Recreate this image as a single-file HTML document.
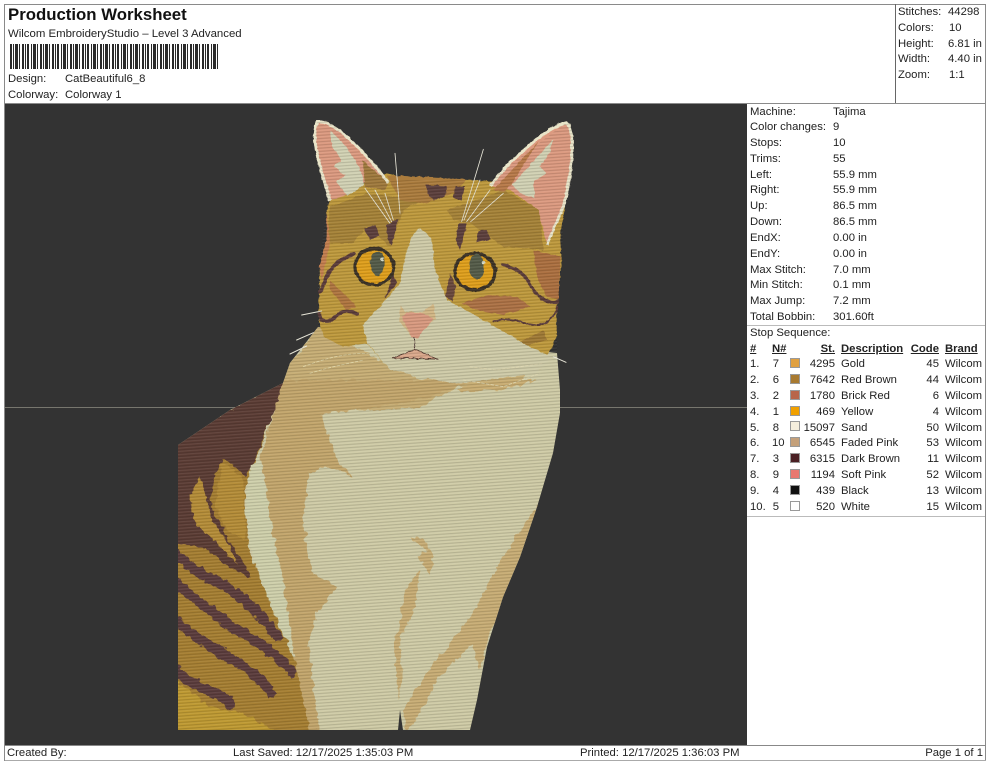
<!DOCTYPE html>
<html><head><meta charset="utf-8"><style>
html,body{margin:0;padding:0;background:#fff}
#p{position:relative;width:990px;height:762px;overflow:hidden;background:#fff;font-family:"Liberation Sans",sans-serif;font-size:11.3px;color:#222}
#p div{position:absolute;white-space:nowrap;line-height:16px;height:16px}
#p div.b{background:#8a8a8a;height:auto}
#p div.s{height:10px;width:10px;box-sizing:border-box;border:1px solid #999}
.r{text-align:right}
.u{font-weight:bold;text-decoration:underline}
</style></head><body><div id="p">
<div class="b" style="left:5px;top:4px;width:981px;height:1px"></div>
<div class="b" style="left:4px;top:4px;width:1px;height:757px"></div>
<div class="b" style="left:985px;top:4px;width:1px;height:757px"></div>
<div class="b" style="left:895px;top:4px;width:1px;height:100px;background:#666"></div>
<div class="b" style="left:5px;top:103px;width:981px;height:1px"></div>
<div class="b" style="left:5px;top:760px;width:981px;height:1px;background:#aaa"></div>
<div class="b" style="left:5px;top:745px;width:981px;height:1px;background:#888"></div>
<div class="b" style="left:747px;top:325px;width:238px;height:1px;background:#bbb"></div>
<div class="b" style="left:747px;top:516px;width:238px;height:1px;background:#bbb"></div>

<div style="left:8px;top:7px;font-size:16.8px;font-weight:bold;color:#111">Production Worksheet</div>
<div style="left:8px;top:26px;font-size:11.4px">Wilcom EmbroideryStudio – Level 3 Advanced</div>
<svg style="position:absolute;left:10px;top:44px" width="210" height="25"><line x1="0" y1="12.5" x2="209" y2="12.5" stroke="#2a2a2a" stroke-width="25" stroke-dasharray="2 1 1 1 3 1 1 2 2 1 1 1 2 2 1 1 3 1 1 2"/></svg>
<div style="left:8px;top:71px">Design:</div><div style="left:65px;top:71px">CatBeautiful6_8</div>
<div style="left:8px;top:87px">Colorway:</div><div style="left:65px;top:87px">Colorway 1</div>

<div style="left:898px;top:4px">Stitches:</div><div style="left:948px;top:4px">44298</div>
<div style="left:898px;top:20px">Colors:</div><div style="left:949px;top:20px">10</div>
<div style="left:898px;top:36px">Height:</div><div style="left:948px;top:36px">6.81 in</div>
<div style="left:898px;top:51px">Width:</div><div style="left:948px;top:51px">4.40 in</div>
<div style="left:898px;top:67px">Zoom:</div><div style="left:949px;top:67px">1:1</div>

<svg style="position:absolute;left:0;top:0" width="990" height="762" viewBox="0 0 990 762">
<defs>
<pattern id="t" width="6" height="3.2" patternUnits="userSpaceOnUse" patternTransform="rotate(-4)"><rect width="6" height="1.1" fill="#000" opacity=".13"/><rect y="1.6" width="6" height=".7" fill="#fff" opacity=".08"/></pattern>
<clipPath id="all"><path d="M178,445 L230,410 L283,383 L290,363 L318,327 L318,277 L327,203 L315,137 L317,120 L329,120 L387,180 L467,180 L490,180 L567,122 L573,133 L573,177 L563,220 L562,257 L557,323 L557,353 L560,390 L560,413 L553,453 L537,507 L520,557 L503,597 L487,647 L477,700 L470,730 L403,730 L400,710 L398,730 L178,730Z"/></clipPath>
<clipPath id="bd"><path d="M178,445 L230,410 L283,383 L290,363 L318,327 L557,353 L560,390 L560,413 L553,453 L537,507 L520,557 L503,597 L487,647 L477,700 L470,730 L403,730 L400,710 L398,730 L178,730Z"/></clipPath>
<filter id="rough" filterUnits="userSpaceOnUse" x="150" y="320" width="440" height="430"><feTurbulence type="fractalNoise" baseFrequency=".16" numOctaves="2" seed="4"/><feDisplacementMap in="SourceGraphic" scale="7" xChannelSelector="R" yChannelSelector="G"/></filter>
<filter id="soft" filterUnits="userSpaceOnUse" x="280" y="110" width="310" height="300"><feTurbulence type="fractalNoise" baseFrequency=".2" numOctaves="2" seed="9"/><feDisplacementMap in="SourceGraphic" scale="3" xChannelSelector="R" yChannelSelector="G"/></filter>
</defs>
<rect x="5" y="104" width="742" height="641" fill="#333333"/>
<rect x="5" y="407" width="742" height="1" fill="#77766e"/>
<!-- body -->
<g clip-path="url(#bd)">
<rect x="170" y="320" width="400" height="420" fill="#cfcba6"/>
<g filter="url(#rough)">
<path d="M285,370 L318,327 L420,380 L540,345 L520,385 L457,387 L420,408 L320,412 L283,400 Z" fill="#c7ae74"/>
<g transform="translate(170,380) scale(.33333)">
<path d="M0,190 L180,90 L350,0 L300,120 L260,240 L225,320 L225,420 L240,520 L280,620 L340,760 L400,900 L440,1060 L0,1060Z" fill="#a67f32"/>
<path d="M0,890 L120,980 L220,1000 L330,1060 L0,1060Z" fill="#bf9a30"/>
<path d="M0,190 L180,90 L350,0 L300,120 L258,235 L225,290 L190,255 L160,240 L135,290 L120,370 L170,470 L245,590 L170,560 L100,500 L0,490Z" fill="#5c3c36"/>
<path d="M90,290 L60,350 L70,420 L130,480 L200,550 L170,480 L120,410 L105,340Z" fill="#b58d38"/>
<path d="M160,245 L220,300 L225,480 L170,450 L135,370 L150,280Z" fill="#b58d38"/>
<g fill="none" stroke="#5c3e3c" stroke-linecap="butt" stroke-linejoin="round">
<path d="M0,510 C60,560 100,590 150,610 C210,640 280,710 330,780" stroke-width="30"/>
<path d="M0,590 C60,650 110,680 170,730 C240,770 320,820 375,885" stroke-width="30"/>
<path d="M0,700 C60,770 120,790 170,830 C230,860 280,900 310,950" stroke-width="30"/>
<path d="M0,860 C60,910 110,930 145,945 C165,950 180,965 185,985" stroke-width="30"/>
</g>
<path d="M240,260 L225,400 L240,500 L280,620 L340,760 L370,830 L340,600 L310,470 L290,330 L270,240Z" fill="#cfd0ab"/>
<path d="M340,0 L272,230 L290,330 L310,470 L340,600 L370,820 L420,1060 L450,1060 L415,800 L440,700 L500,620 L430,580 L410,500 L400,400 L420,280 L460,260 L550,290 L500,240 L450,100 L600,85 L780,50 L860,20 L920,0 Z" fill="#c3a66c"/>
<path d="M860,35 L1000,30 L1100,0 L1000,0 L880,20Z" fill="#c9ad72"/>
<path d="M1105,370 C1050,450 960,590 920,680 C870,760 780,850 700,990 L710,1060 L750,1000 L800,900 L905,790 L930,870 L960,760 L1010,650 L1080,520 Z" fill="#c8ad74"/>
<path d="M750,570 L700,640 L688,750 L672,770 L685,960 L695,900 L690,770 L730,700 Z" fill="#c8ad74"/>
<path d="M722,475 L755,470 L790,525 L780,582 L745,530 L770,510Z" fill="#c8ad74"/>
</g>
</g>
</g>
<g filter="url(#soft)">
<g transform="translate(290,110) scale(.33333)">
<!-- head -->
<path d="M120,270 L110,300 L115,380 L90,470 L85,620 L100,680 L160,710 L230,700 L300,780 L500,820 L750,780 L800,680 L800,600 L815,450 L810,380 L825,290 L780,200 L600,215 L530,208 L350,203 L290,190Z" fill="#bf9a3c"/>
<!-- dark bands -->
<path d="M120,290 L230,250 L400,270 L340,300 L300,410 L230,350 L190,400 L110,400Z" fill="#a68338"/>
<path d="M290,195 L530,208 L490,250 L400,280 L330,270Z" fill="#ab7c3c"/>
<path d="M470,300 L560,270 L640,240 L750,300 L760,420 L640,410 L540,340 L490,330Z" fill="#a68338"/>
<path d="M110,300 L120,400 L95,510 L88,470 L110,380Z" fill="#c47f50"/>
<path d="M730,420 L812,440 L805,570 L770,560 L740,500Z" fill="#ac7040"/>
<path d="M515,580 L590,555 L680,560 L720,590 L640,615 L560,600Z" fill="#ad7244"/>
<path d="M120,510 L200,590 L170,600 L120,540Z" fill="#b0763f"/>
<path d="M680,700 L760,660 L770,690 L700,710Z" fill="#a07a34"/>
<!-- muzzle -->
<path d="M392,355 L425,385 L435,480 L470,570 L600,640 L700,700 L785,740 L740,790 L500,822 L300,780 L232,700 L218,645 L260,600 L330,520 L345,440 L370,370Z" fill="#cfcba8"/>
<!-- ears -->
<path d="M120,272 C90,170 60,80 82,36 C130,28 220,120 295,218 L230,215 L170,255Z" fill="#dc9a80"/>
<path d="M120,62 C170,105 215,165 222,225 L170,258 L140,215 L165,195 L130,170 L155,150 L125,110Z" fill="#d2d2b4"/>
<path d="M218,150 L295,218 L285,240 L225,230Z" fill="#a07a3c"/>
<path d="M120,272 C90,170 60,80 82,36 C130,28 220,120 295,218" fill="none" stroke="#e9e5c9" stroke-width="9"/>
<path d="M600,228 C660,150 770,50 830,38 C855,60 850,180 820,290 L770,405 L745,300 L660,240Z" fill="#dc9a80"/>
<path d="M665,225 L790,88 L780,125 L750,170 L770,190 L730,215 L735,265 L690,250Z" fill="#d2d2b4"/>
<path d="M610,240 L745,95 L665,222 L640,245Z" fill="#b87a48"/>
<path d="M600,228 C660,150 770,50 830,38 C855,60 850,180 820,290 L770,405" fill="none" stroke="#e9e5c9" stroke-width="9"/>
<!-- eye lines -->
<g fill="none" stroke="#5b3d3a" stroke-linecap="round" stroke-linejoin="round">
<path d="M92,545 C110,490 130,455 190,432" stroke-width="12"/>
<path d="M88,612 C90,640 125,640 145,612 C165,598 185,608 200,610" stroke-width="11"/>
<path d="M640,465 C695,480 705,495 730,540 C750,570 780,580 802,575" stroke-width="10"/>
<path d="M612,635 C660,618 700,640 730,645 C770,648 795,620 802,590" stroke-width="6"/>
</g>
<path d="M310,490 L320,520 L285,565 L295,535Z" fill="#5b3d3a"/>
<path d="M480,490 L497,530 L490,575 L465,560Z" fill="#6b4a3c"/>
<!-- forehead marks -->
<g fill="#5d3f3d">
<path d="M408,225 L470,228 L465,262 L430,270 L410,250Z"/>
<path d="M495,230 L525,228 L515,272 L490,262Z"/>
<path d="M290,345 L325,325 L305,410 L292,385Z"/>
<path d="M222,355 L258,345 L268,378 L240,390Z"/>
<path d="M505,340 L530,340 L510,420 L497,390Z"/>
<path d="M565,362 L590,360 L602,388 L560,398Z"/>
</g>
<!-- eyes -->
<ellipse cx="253" cy="470" rx="63" ry="60" fill="#3a3026"/>
<ellipse cx="253" cy="470" rx="52" ry="50" fill="#e0a01c"/>
<ellipse cx="262" cy="460" rx="22" ry="36" fill="#555b4a"/>
<circle cx="275" cy="448" r="5" fill="#d8dcc8"/>
<ellipse cx="555" cy="485" rx="66" ry="60" fill="#3a3026"/>
<ellipse cx="555" cy="485" rx="55" ry="50" fill="#e0a01c"/>
<ellipse cx="560" cy="470" rx="22" ry="38" fill="#555b4a"/>
<circle cx="580" cy="458" r="5" fill="#d8dcc8"/>
<!-- nose -->
<path d="M332,585 L345,605 L395,608 L430,582 L438,625 L400,660 L385,682 L365,682 L328,632Z" fill="#d3b886"/>
<path d="M335,622 L350,608 L400,610 L432,628 L405,655 L385,682 L365,682Z" fill="#d99a80"/>
<path d="M373,680 L375,716" stroke="#4a3030" stroke-width="3" fill="none"/>
<path d="M305,745 L375,718 L445,748 C400,745 350,745 305,745Z" fill="#dba98c" stroke="#553a30" stroke-width="2.5"/>
</g>
</g>
<g transform="translate(290,110) scale(.33333)">
<!-- whiskers -->
<g stroke="#e8e6d8" fill="none" stroke-linecap="round">
<path d="M315,130 L330,310 M225,235 L300,340 M255,240 L305,335 M285,250 L310,330" stroke-width="2.5"/>
<path d="M580,118 L515,335 M570,210 L522,330 M600,240 L530,335 M640,250 L542,335" stroke-width="2.5"/>
<path d="M35,615 L95,603 M20,690 L70,668 M0,732 L50,708 M790,740 L828,757" stroke-width="3"/>
<path d="M40,770 C120,740 170,730 235,730 M60,790 C120,770 180,760 220,750" stroke="#e0d6a8" stroke-width="2.5" stroke-dasharray="8 6"/>
<path d="M540,770 L620,780 L760,760 M520,810 L640,830 L750,790" stroke="#dfd7b0" stroke-width="2.5" stroke-dasharray="8 6"/>
</g>
</g>
<!-- thread texture -->
<rect x="178" y="120" width="400" height="610" fill="url(#t)" clip-path="url(#all)"/>
</svg>

<div style="left:750px;top:104px">Machine:</div><div style="left:833px;top:104px">Tajima</div>
<div style="left:750px;top:119px">Color changes:</div><div style="left:833px;top:119px">9</div>
<div style="left:750px;top:135px">Stops:</div><div style="left:833px;top:135px">10</div>
<div style="left:750px;top:151px">Trims:</div><div style="left:833px;top:151px">55</div>
<div style="left:750px;top:167px">Left:</div><div style="left:833px;top:167px">55.9 mm</div>
<div style="left:750px;top:182px">Right:</div><div style="left:833px;top:182px">55.9 mm</div>
<div style="left:750px;top:198px">Up:</div><div style="left:833px;top:198px">86.5 mm</div>
<div style="left:750px;top:214px">Down:</div><div style="left:833px;top:214px">86.5 mm</div>
<div style="left:750px;top:230px">EndX:</div><div style="left:833px;top:230px">0.00 in</div>
<div style="left:750px;top:246px">EndY:</div><div style="left:833px;top:246px">0.00 in</div>
<div style="left:750px;top:262px">Max Stitch:</div><div style="left:833px;top:262px">7.0 mm</div>
<div style="left:750px;top:277px">Min Stitch:</div><div style="left:833px;top:277px">0.1 mm</div>
<div style="left:750px;top:293px">Max Jump:</div><div style="left:833px;top:293px">7.2 mm</div>
<div style="left:750px;top:309px">Total Bobbin:</div><div style="left:833px;top:309px">301.60ft</div>
<div style="left:750px;top:325px">Stop Sequence:</div>

<div class="u" style="left:750px;top:341px">#</div>
<div class="u" style="left:772px;top:341px">N#</div>
<div class="u r" style="left:795px;width:40px;top:341px">St.</div>
<div class="u" style="left:841px;top:341px">Description</div>
<div class="u r" style="left:899px;width:40px;top:341px">Code</div>
<div class="u" style="left:945px;top:341px">Brand</div>

<div style="left:750px;top:356px">1.</div><div class="r" style="left:765px;width:14px;top:356px">7</div><div class="s" style="left:790px;top:358px;background:#e0a040"></div><div class="r" style="left:795px;width:40px;top:356px">4295</div><div style="left:841px;top:356px">Gold</div><div class="r" style="left:899px;width:40px;top:356px">45</div><div style="left:945px;top:356px">Wilcom</div>
<div style="left:750px;top:372px">2.</div><div class="r" style="left:765px;width:14px;top:372px">6</div><div class="s" style="left:790px;top:374px;background:#a87a30"></div><div class="r" style="left:795px;width:40px;top:372px">7642</div><div style="left:841px;top:372px">Red Brown</div><div class="r" style="left:899px;width:40px;top:372px">44</div><div style="left:945px;top:372px">Wilcom</div>
<div style="left:750px;top:388px">3.</div><div class="r" style="left:765px;width:14px;top:388px">2</div><div class="s" style="left:790px;top:390px;background:#b8664a"></div><div class="r" style="left:795px;width:40px;top:388px">1780</div><div style="left:841px;top:388px">Brick Red</div><div class="r" style="left:899px;width:40px;top:388px">6</div><div style="left:945px;top:388px">Wilcom</div>
<div style="left:750px;top:404px">4.</div><div class="r" style="left:765px;width:14px;top:404px">1</div><div class="s" style="left:790px;top:406px;background:#f0a000"></div><div class="r" style="left:795px;width:40px;top:404px">469</div><div style="left:841px;top:404px">Yellow</div><div class="r" style="left:899px;width:40px;top:404px">4</div><div style="left:945px;top:404px">Wilcom</div>
<div style="left:750px;top:420px">5.</div><div class="r" style="left:765px;width:14px;top:420px">8</div><div class="s" style="left:790px;top:421px;background:#f5eedd"></div><div class="r" style="left:795px;width:40px;top:420px">15097</div><div style="left:841px;top:420px">Sand</div><div class="r" style="left:899px;width:40px;top:420px">50</div><div style="left:945px;top:420px">Wilcom</div>
<div style="left:750px;top:435px">6.</div><div style="left:772px;top:435px">10</div><div class="s" style="left:790px;top:437px;background:#c4a07a"></div><div class="r" style="left:795px;width:40px;top:435px">6545</div><div style="left:841px;top:435px">Faded Pink</div><div class="r" style="left:899px;width:40px;top:435px">53</div><div style="left:945px;top:435px">Wilcom</div>
<div style="left:750px;top:451px">7.</div><div class="r" style="left:765px;width:14px;top:451px">3</div><div class="s" style="left:790px;top:453px;background:#4a2024"></div><div class="r" style="left:795px;width:40px;top:451px">6315</div><div style="left:841px;top:451px">Dark Brown</div><div class="r" style="left:899px;width:40px;top:451px">11</div><div style="left:945px;top:451px">Wilcom</div>
<div style="left:750px;top:467px">8.</div><div class="r" style="left:765px;width:14px;top:467px">9</div><div class="s" style="left:790px;top:469px;background:#e87870"></div><div class="r" style="left:795px;width:40px;top:467px">1194</div><div style="left:841px;top:467px">Soft Pink</div><div class="r" style="left:899px;width:40px;top:467px">52</div><div style="left:945px;top:467px">Wilcom</div>
<div style="left:750px;top:483px">9.</div><div class="r" style="left:765px;width:14px;top:483px">4</div><div class="s" style="left:790px;top:485px;background:#111"></div><div class="r" style="left:795px;width:40px;top:483px">439</div><div style="left:841px;top:483px">Black</div><div class="r" style="left:899px;width:40px;top:483px">13</div><div style="left:945px;top:483px">Wilcom</div>
<div style="left:750px;top:499px">10.</div><div class="r" style="left:765px;width:14px;top:499px">5</div><div class="s" style="left:790px;top:501px;background:#fff"></div><div class="r" style="left:795px;width:40px;top:499px">520</div><div style="left:841px;top:499px">White</div><div class="r" style="left:899px;width:40px;top:499px">15</div><div style="left:945px;top:499px">Wilcom</div>

<div style="left:7px;top:745px">Created By:</div>
<div style="left:233px;top:745px">Last Saved: 12/17/2025 1:35:03 PM</div>
<div style="left:580px;top:745px">Printed: 12/17/2025 1:36:03 PM</div>
<div class="r" style="left:885px;width:98px;top:745px">Page 1 of 1</div>
</div></body></html>
